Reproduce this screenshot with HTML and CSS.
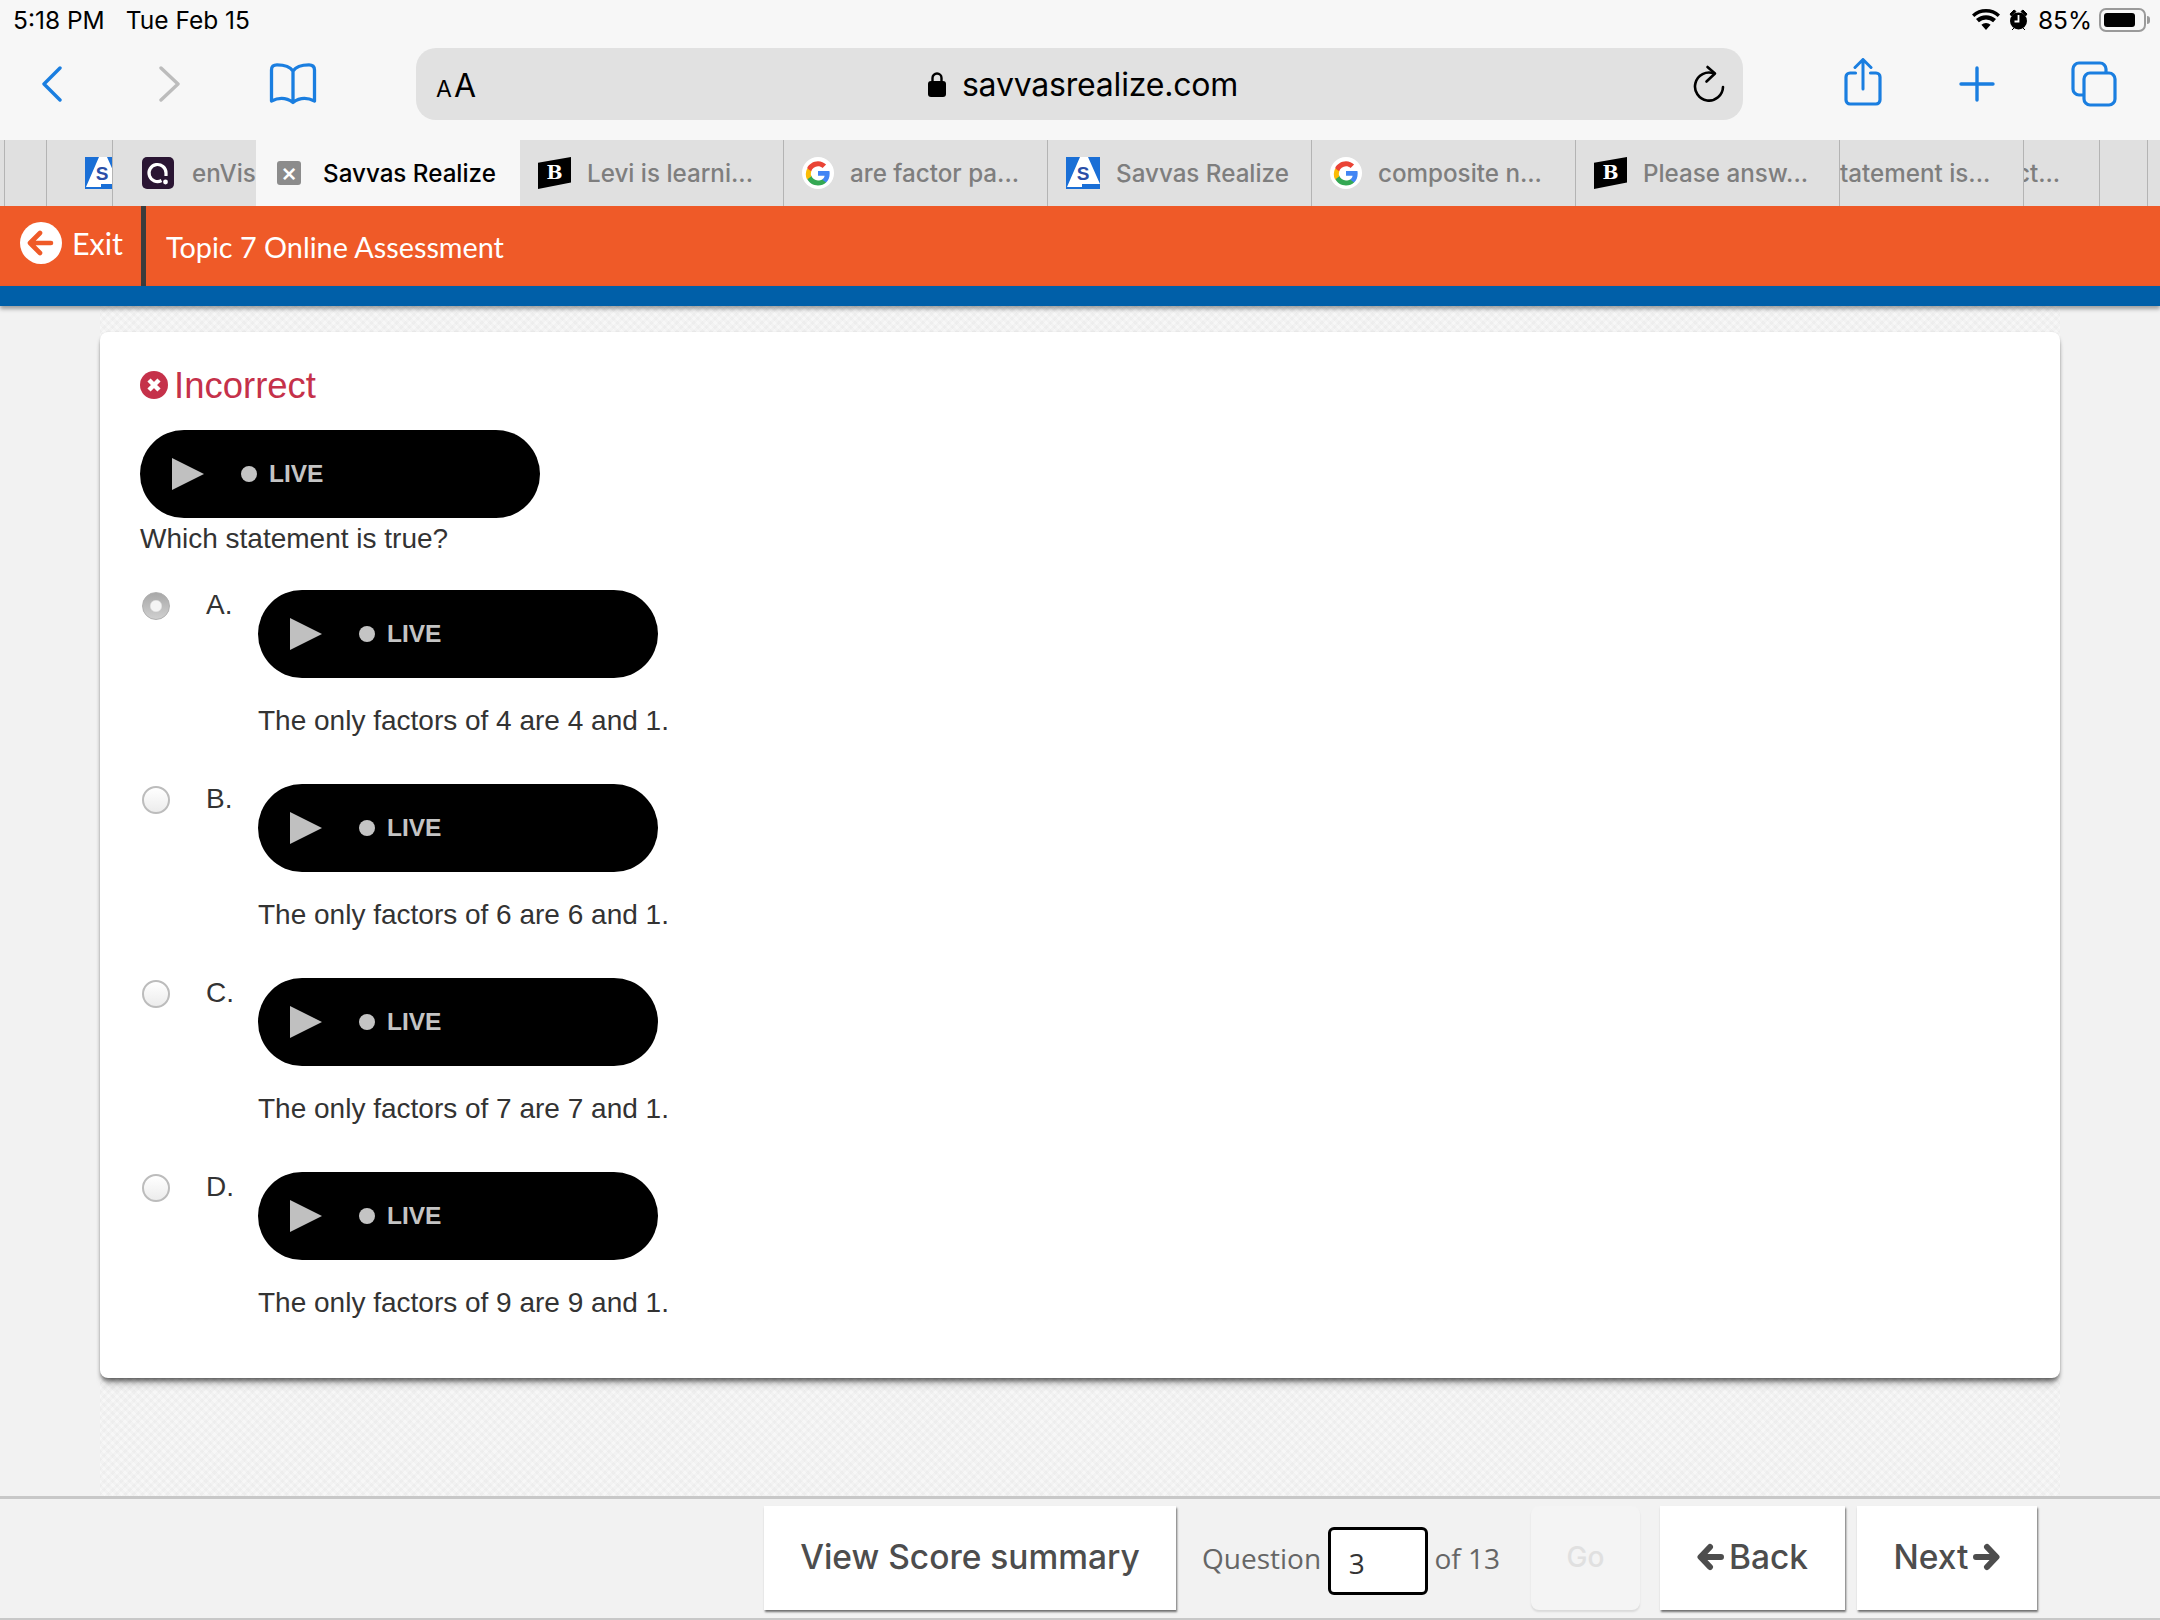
FILE: index.html
```html
<!DOCTYPE html>
<html lang="en">
<head>
    <meta charset="UTF-8">
    <title>Topic 7 Online Assessment</title>
    <link rel="stylesheet" href="styles.css">
</head>
<body>
    <div class="status-bar">
        <div class="status-left"><span>5:18 PM</span><span>Tue Feb 15</span></div>
        <div class="status-right">
            <svg class="wifi" width="28" height="22" viewBox="0 0 28 22"><path d="M14 21l-4.600-5.200a6.800 6.800 0 0 1 9.200 0zM6.900 13.200L4 10a15 15 0 0 1 20 0l-2.900 3.200a10.600 10.600 0 0 0-14.200 0zM2.300 8.100L0 5.400a21 21 0 0 1 28 0l-2.300 2.700a17.500 17.500 0 0 0-23.400 0z" fill="#000"/></svg>
            <svg class="alarm" width="19" height="24" viewBox="0 0 19 24"><circle cx="9.500" cy="13" r="8.500" fill="#000"/><path d="M1 6l4-4 2 1.500-4.500 4.500zM18 6l-4-4-2 1.500 4.500 4.500zM3 22l2-2M16 22l-2-2" fill="#000" stroke="#000" stroke-width="1"/><path d="M9.500 7v6.500h-4" stroke="#fff" stroke-width="1.800" fill="none"/></svg>
            <span class="battery-pct">85%</span>
            <div class="battery"><div class="battery-fill"></div></div>
            <div class="battery-nub"></div>
        </div>
    </div>

    <div class="toolbar">
        <svg class="tb-back" width="20" height="36" viewBox="0 0 20 36"><path d="M18 2L2 18l16 16" stroke="#1a7ee0" stroke-width="3.400" stroke-linecap="round" stroke-linejoin="round" fill="none"/></svg>
        <svg class="tb-forward" width="22" height="36" viewBox="0 0 22 36"><path d="M3 2l17 16L3 34" stroke="#bcbcbc" stroke-width="3.400" stroke-linecap="round" stroke-linejoin="round" fill="none"/></svg>
        <svg class="tb-book" width="48" height="42" viewBox="0 0 48 42"><path d="M24 8C21 3.500 15 1.800 8 1.800 4.500 1.800 2.500 3.500 2.500 7v31c7-3.500 15-3.500 21.500 1.500C30.500 34.500 38.500 34.500 45.500 38V7c0-3.500-2-5.200-5.500-5.200C33 1.800 27 3.500 24 8zm0 0v31" stroke="#1a7ee0" stroke-width="3.300" stroke-linejoin="round" fill="none"/></svg>
        <div class="address">
            <div class="aa"><span class="aa-small">A</span>A</div>
            <div class="url">
                <svg width="18" height="26" viewBox="0 0 18 26"><path d="M4.500 11V7a4.500 4.500 0 0 1 9 0v4" stroke="#000" stroke-width="2.400" fill="none"/><rect y="10" width="18" height="16" rx="3" fill="#000"/></svg>
                <span>savvasrealize.com</span>
            </div>
            <svg class="reload" width="32" height="38" viewBox="0 0 32 38"><path d="M21 8.500A14 14 0 1 0 30 22" stroke="#000" stroke-width="2.600" stroke-linecap="round" fill="none"/><path d="M14.500 2L22 8.500l-8.500 8" stroke="#000" stroke-width="2.600" stroke-linecap="round" stroke-linejoin="round" fill="none"/></svg>
        </div>
        <svg class="tb-share" width="38" height="48" viewBox="0 0 38 48"><path d="M11.500 15H6a4 4 0 0 0-4 4v23a4 4 0 0 0 4 4h26a4 4 0 0 0 4-4V19a4 4 0 0 0-4-4h-5.500" stroke="#1a7ee0" stroke-width="3.200" stroke-linecap="round" fill="none"/><path d="M19 31V2.500M11 9.500l8-8 8 8" stroke="#1a7ee0" stroke-width="3" stroke-linecap="round" stroke-linejoin="round" fill="none"/></svg>
        <svg class="tb-plus" width="36" height="36" viewBox="0 0 36 36"><path d="M18 2v32M2 18h32" stroke="#1a7ee0" stroke-width="3.400" stroke-linecap="round" fill="none"/></svg>
        <svg class="tb-tabs" width="46" height="46" viewBox="0 0 46 46"><path d="M12 34H8a6 6 0 0 1-6-6V8a6 6 0 0 1 6-6h21a6 6 0 0 1 6 6v4" stroke="#1a7ee0" stroke-width="3.200" fill="none"/><rect x="13" y="12" width="31" height="32" rx="6" stroke="#1a7ee0" stroke-width="3.200" fill="none"/></svg>
    </div>

    <div class="tab-strip">
        <div class="tab tab-stub-a"></div>
        <div class="tab tab-stub-b">
            <svg width="28" height="32" viewBox="0 0 28 32"><rect width="34" height="32" fill="#1a6fd6"/><path d="M14 0L1 30h15l2-3h16L22 0z" fill="#fff"/><rect x="16" y="27" width="18" height="5" fill="#1a6fd6"/><text x="17" y="23" class="favicon-s-letter">S</text></svg>
        </div>
        <div class="tab tab-envis">
            <svg width="32" height="32" viewBox="0 0 32 32"><rect width="32" height="32" rx="5" fill="#2a1533"/><path d="M19.500 23.500A8.500 8.500 0 1 1 24 16v3" stroke="#fff" stroke-width="3.200" fill="none"/><circle cx="23.500" cy="25" r="2.400" fill="#fff"/></svg>
            <span>enVis</span>
        </div>
        <div class="tab tab-active">
            <div class="tab-close">×</div>
            <span>Savvas Realize</span>
        </div>
        <div class="tab">
            <div class="favicon-b">B</div>
            <span>Levi is learni...</span>
        </div>
        <div class="tab">
            <svg width="32" height="32" viewBox="0 0 48 48"><circle cx="24" cy="24" r="24" fill="#fff"/><g transform="translate(24 24) scale(1.250) translate(-24 -24)"><path d="M38 24.500c0-1-.1-2-.3-3H24v5.700h7.900c-.3 1.900-1.400 3.500-3 4.500v3.700h4.800c2.800-2.600 4.300-6.400 4.300-10.900z" fill="#4285f4"/><path d="M24 39c4 0 7.400-1.300 9.700-3.600l-4.800-3.700c-1.300.9-3 1.400-4.900 1.400-3.800 0-7-2.600-8.200-6h-4.900v3.800C13.300 35.700 18.300 39 24 39z" fill="#34a853"/><path d="M15.800 28.100c-.6-1.800-.6-3.700 0-5.500v-3.800h-4.900a15 15 0 0 0 0 13.100z" fill="#fbbc05"/><path d="M24 15.900c2.100 0 4 .7 5.500 2.200l4.200-4.200C31.200 11.500 27.900 10 24 10c-5.700 0-10.700 3.300-13.100 8.200l4.900 3.800c1.200-3.500 4.400-6.100 8.200-6.100z" fill="#ea4335"/></g></svg>
            <span>are factor pa...</span>
        </div>
        <div class="tab">
            <svg width="34" height="32" viewBox="0 0 34 32"><rect width="34" height="32" fill="#1a6fd6"/><path d="M14 0L1 30h15l2-3h16L22 0z" fill="#fff"/><rect x="16" y="27" width="18" height="5" fill="#1a6fd6"/><text x="17" y="23" class="favicon-s-letter">S</text></svg>
            <span>Savvas Realize</span>
        </div>
        <div class="tab">
            <svg width="32" height="32" viewBox="0 0 48 48"><circle cx="24" cy="24" r="24" fill="#fff"/><g transform="translate(24 24) scale(1.250) translate(-24 -24)"><path d="M38 24.500c0-1-.1-2-.3-3H24v5.700h7.900c-.3 1.900-1.400 3.500-3 4.500v3.700h4.800c2.800-2.600 4.300-6.400 4.300-10.900z" fill="#4285f4"/><path d="M24 39c4 0 7.400-1.300 9.700-3.600l-4.800-3.700c-1.300.9-3 1.400-4.900 1.400-3.800 0-7-2.600-8.200-6h-4.900v3.800C13.300 35.700 18.300 39 24 39z" fill="#34a853"/><path d="M15.800 28.100c-.6-1.800-.6-3.700 0-5.500v-3.800h-4.900a15 15 0 0 0 0 13.100z" fill="#fbbc05"/><path d="M24 15.900c2.100 0 4 .7 5.500 2.200l4.200-4.200C31.200 11.500 27.900 10 24 10c-5.700 0-10.700 3.300-13.100 8.200l4.900 3.800c1.200-3.500 4.400-6.100 8.200-6.100z" fill="#ea4335"/></g></svg>
            <span>composite n...</span>
        </div>
        <div class="tab">
            <div class="favicon-b">B</div>
            <span>Please answ...</span>
        </div>
        <div class="tab tab-cut"><span>tatement is...</span></div>
        <div class="tab tab-cut-small"><span>ct...</span></div>
        <div class="tab tab-stub-c"></div>
    </div>

    <div class="app-header">
        <div class="exit">
            <svg width="42" height="42" viewBox="0 0 42 42"><circle cx="21" cy="21" r="21" fill="#fff"/><path d="M20 11L10 21l10 10M11 21h20" stroke="#ef5a28" stroke-width="4.600" stroke-linecap="round" stroke-linejoin="round" fill="none"/></svg>
            <span>Exit</span>
        </div>
        <div class="app-title">Topic 7 Online Assessment</div>
    </div>
    <div class="blue-bar"></div>

    <div class="main">
        <div class="paper">
            <div class="card">
                <div class="result">
                    <svg width="28" height="28" viewBox="0 0 28 28"><circle cx="14" cy="14" r="14" fill="#c5314a"/><path d="M9 9l10 10M19 9L9 19" stroke="#fff" stroke-width="4.500"/></svg>
                    <span>Incorrect</span>
                </div>
                <div class="live-pill"><div class="play"></div><div class="live-dot"></div><span>LIVE</span></div>
                <div class="question">Which statement is true?</div>

                <div class="option">
                    <div class="radio radio-on"></div>
                    <div class="option-label">A.</div>
                    <div class="option-body">
                        <div class="live-pill"><div class="play"></div><div class="live-dot"></div><span>LIVE</span></div>
                        <div class="option-text">The only factors of 4 are 4 and 1.</div>
                    </div>
                </div>
                <div class="option">
                    <div class="radio"></div>
                    <div class="option-label">B.</div>
                    <div class="option-body">
                        <div class="live-pill"><div class="play"></div><div class="live-dot"></div><span>LIVE</span></div>
                        <div class="option-text">The only factors of 6 are 6 and 1.</div>
                    </div>
                </div>
                <div class="option">
                    <div class="radio"></div>
                    <div class="option-label">C.</div>
                    <div class="option-body">
                        <div class="live-pill"><div class="play"></div><div class="live-dot"></div><span>LIVE</span></div>
                        <div class="option-text">The only factors of 7 are 7 and 1.</div>
                    </div>
                </div>
                <div class="option">
                    <div class="radio"></div>
                    <div class="option-label">D.</div>
                    <div class="option-body">
                        <div class="live-pill"><div class="play"></div><div class="live-dot"></div><span>LIVE</span></div>
                        <div class="option-text">The only factors of 9 are 9 and 1.</div>
                    </div>
                </div>
            </div>
        </div>
    </div>

    <div class="footer">
        <button class="btn btn-summary">View Score summary</button>
        <div class="question-nav">
            <span>Question</span>
            <div class="question-input">3</div>
            <span>of 13</span>
        </div>
        <button class="btn btn-go">Go</button>
        <button class="btn btn-back">
            <svg width="27" height="28" viewBox="0 0 27 28"><path d="M13 4L3.500 14l9.500 10M5 14h19" stroke="#4d4d4d" stroke-width="6" stroke-linecap="round" stroke-linejoin="round" fill="none"/></svg>
            Back
        </button>
        <button class="btn btn-next">
            Next
            <svg width="27" height="28" viewBox="0 0 27 28"><path d="M14 4l9.500 10L14 24M22 14H3" stroke="#4d4d4d" stroke-width="6" stroke-linecap="round" stroke-linejoin="round" fill="none"/></svg>
        </button>
    </div>
</body>
</html>
```

FILE: styles.css
```css
body {
    margin: 0;
    width: 2160px;
    height: 1620px;
    overflow: hidden;
    display: flex;
    flex-direction: column;
    background-color: #f2f2f2;
    font-family: "Liberation Sans", Arial, sans-serif;
}

svg {
    display: block;
    flex: none;
}

/* ipad status bar */
.status-bar {
    height: 40px;
    padding: 0 10px 0 13px;
    background-color: #f7f7f7;
    display: flex;
    justify-content: space-between;
    align-items: center;
    font-family: Inter, sans-serif;
    font-size: 24.500px;
    color: #000;
}

.status-left {
    display: flex;
    gap: 21px;
}

.status-right {
    display: flex;
    align-items: center;
}

.alarm {
    margin-left: 9px;
}

.battery-pct {
    margin-left: 10px;
}

.battery {
    margin-left: 7px;
    width: 47px;
    height: 24px;
    padding: 3px;
    box-sizing: border-box;
    border: 2px solid #9a9a9a;
    border-radius: 7px;
}

.battery-fill {
    width: 85%;
    height: 100%;
    background-color: #000;
    border-radius: 3px;
}

.battery-nub {
    width: 3px;
    height: 8px;
    margin-left: 1px;
    background-color: #9a9a9a;
    border-radius: 0 3px 3px 0;
}

/* safari toolbar */
.toolbar {
    height: 100px;
    padding: 0 0 12px 42px;
    box-sizing: border-box;
    background-color: #f7f7f7;
    display: flex;
    align-items: center;
}

.tb-forward {
    margin-left: 96px;
}

.tb-book {
    margin-left: 89px;
}

.address {
    margin-left: 99px;
    width: 1327px;
    height: 72px;
    padding: 0 18px 0 20px;
    box-sizing: border-box;
    background-color: #e1e1e1;
    border-radius: 20px;
    display: grid;
    grid-template-columns: 1fr auto 1fr;
    align-items: center;
}

.aa {
    font-family: Inter, sans-serif;
    font-size: 32px;
    color: #000;
    line-height: 1;
    padding-top: 4px;
}

.aa-small {
    font-size: 23px;
    margin-right: 2px;
}

.url {
    display: flex;
    align-items: center;
    gap: 16px;
    font-family: Inter, sans-serif;
    font-size: 32px;
    letter-spacing: -0.2px;
    color: #000;
    margin-left: 5px;
}

.reload {
    justify-self: end;
}

.tb-share {
    margin-left: 101px;
    margin-top: -4px;
}

.tb-plus {
    margin-left: 77px;
}

.tb-tabs {
    margin-left: 76px;
}

/* tab strip */
.tab-strip {
    height: 66px;
    background-color: #e0e0e0;
    display: flex;
    font-family: Inter, sans-serif;
    font-size: 24.200px;
    font-weight: 500;
    color: #7e7e7e;
}

.tab {
    width: 264px;
    flex: none;
    box-sizing: border-box;
    border-right: 1px solid #b4b4b4;
    padding-left: 18px;
    display: flex;
    align-items: center;
    gap: 16px;
    white-space: nowrap;
    overflow: hidden;
}

.tab-stub-a {
    width: 43px;
    margin-left: 4px;
    border-left: 1px solid #b4b4b4;
}

.tab-stub-b {
    width: 66px;
    padding-left: 38px;
}

.tab-envis {
    width: 143px;
    padding-left: 29px;
    gap: 18px;
    border-right: none;
}

.tab-active {
    padding-left: 21px;
    gap: 22px;
    background-color: #f7f7f7;
    color: #000;
    border-right: none;
}

.tab-cut {
    width: 184px;
    padding-left: 0;
}

.tab-cut-small {
    width: 76px;
    padding-left: 0;
}

.tab-cut-small span {
    margin-left: -8px;
}

.tab-stub-c {
    width: 48px;
}

.favicon-s-letter {
    font-family: "Liberation Sans", sans-serif;
    font-size: 19px;
    font-weight: 700;
    fill: #2b4fa8;
    text-anchor: middle;
}

.tab-close {
    width: 24px;
    height: 24px;
    flex: none;
    background-color: #8c8c8c;
    border-radius: 3px;
    color: #fff;
    font-size: 25px;
    line-height: 23px;
    text-align: center;
}

.favicon-b {
    width: 33px;
    height: 32px;
    flex: none;
    background-color: #000;
    clip-path: polygon(0 18%, 100% 0, 100% 80%, 0 100%);
    color: #fff;
    font-family: "DejaVu Serif", serif;
    font-size: 19px;
    font-weight: 700;
    line-height: 30px;
    text-align: center;
}

/* assessment header */
.app-header {
    height: 80px;
    background-color: #ef5a28;
    display: flex;
    color: #fff;
    font-family: Lato, sans-serif;
}

.exit {
    width: 141px;
    box-sizing: border-box;
    padding: 16px 0 0 20px;
    display: flex;
    align-items: flex-start;
    gap: 10px;
    font-size: 30.500px;
}

.exit span {
    line-height: 42px;
}

.app-title {
    flex: 1;
    border-left: 5px solid #3c3c3c;
    padding: 23px 0 0 20px;
    font-size: 28.800px;
    line-height: 36px;
}

.blue-bar {
    height: 20px;
    background-color: #005fa8;
    box-shadow: 0 3px 4px rgba(0, 0, 0, 0.35);
    position: relative;
}

/* question area */
.main {
    flex: 1;
    min-height: 0;
    display: flex;
    justify-content: center;
}

.paper {
    width: 1960px;
    padding-top: 26px;
    box-sizing: border-box;
    background-color: #f7f7f7;
    background-image:
        repeating-linear-gradient(45deg, rgba(0, 0, 0, 0.018) 0 3px, transparent 3px 6px),
        repeating-linear-gradient(-45deg, rgba(0, 0, 0, 0.018) 0 3px, transparent 3px 6px);
}

.card {
    height: 1046px;
    box-sizing: border-box;
    padding: 32px 0 0 40px;
    background-color: #fff;
    border-radius: 8px;
    box-shadow: 0 0 2px rgba(0, 0, 0, 0.08), 0 4px 4px -1px rgba(0, 0, 0, 0.5), 0 10px 8px -4px rgba(0, 0, 0, 0.2);
    color: #333;
    font-size: 28px;
}

.result {
    height: 42px;
    margin-bottom: 24px;
    display: flex;
    align-items: center;
    gap: 6px;
    color: #c5314a;
    font-size: 36.500px;
}

.result span {
    padding-top: 2px;
}

.live-pill {
    width: 400px;
    height: 88px;
    padding-left: 32px;
    box-sizing: border-box;
    background-color: #000;
    border-radius: 44px;
    display: flex;
    align-items: center;
    color: #c4c4c4;
    font-size: 24.500px;
    font-weight: 700;
}

.play {
    width: 0;
    height: 0;
    border-left: 32px solid #c0c0c0;
    border-top: 16px solid transparent;
    border-bottom: 16px solid transparent;
}

.live-dot {
    width: 16px;
    height: 16px;
    margin: 0 12px 0 37px;
    background-color: #c4c4c4;
    border-radius: 50%;
}

.question {
    height: 40px;
    line-height: 42px;
    margin-bottom: 32px;
}

.option {
    display: flex;
    margin-bottom: 44px;
}

.radio {
    width: 28px;
    height: 28px;
    margin: 2px 0 0 2px;
    box-sizing: border-box;
    border: 2px solid #bcbcbc;
    border-radius: 50%;
    background-image: linear-gradient(#ffffff, #ececec);
    flex: none;
}

.radio-on {
    border: 1px solid #b0b0b0;
    background-image: radial-gradient(circle, #f4f4f4 0 5px, rgba(244, 244, 244, 0) 6.500px), linear-gradient(#a8a8a8, #cfcfcf);
}

.option-label {
    width: 52px;
    margin-left: 36px;
    line-height: 30px;
}

.option-text {
    margin-top: 22px;
    height: 40px;
    line-height: 42px;
}

/* bottom navigation */
.footer {
    height: 124px;
    padding: 7px 123px 0 0;
    box-sizing: border-box;
    background-color: #f2f2f2;
    border-top: 3px solid #c8c8c8;
    border-bottom: 2px solid #c8c8c8;
    display: flex;
    justify-content: flex-end;
    align-items: flex-start;
    font-family: "Open Sans", sans-serif;
    position: relative;
}

.btn {
    height: 104px;
    padding: 0 0 2px;
    background-color: #fff;
    border: none;
    box-shadow: 1px 2px 2px rgba(0, 0, 0, 0.55);
    display: flex;
    align-items: center;
    justify-content: center;
    gap: 5px;
    color: #4d4d4d;
    font-family: Inter, sans-serif;
    font-size: 33.500px;
    font-weight: 500;
}

.btn-summary {
    width: 412px;
}

.question-nav {
    width: 298px;
    height: 104px;
    margin: 0 31px 0 26px;
    display: flex;
    align-items: center;
    justify-content: space-between;
    color: #666;
    font-size: 28px;
}

.question-input {
    width: 100px;
    height: 68px;
    margin-top: 5px;
    box-sizing: border-box;
    padding-left: 18px;
    background-color: #fff;
    border: 3px solid #000;
    border-radius: 6px;
    color: #333;
    line-height: 66px;
}

.btn-go {
    width: 109px;
    margin-right: 20px;
    background-color: #f4f4f4;
    border-radius: 8px;
    color: #e0e0e0;
    font-size: 28px;
    box-shadow: 0 2px 2px rgba(0, 0, 0, 0.1);
}

.btn-back {
    width: 185px;
    margin-right: 12px;
}

.btn-next {
    width: 180px;
}
```
